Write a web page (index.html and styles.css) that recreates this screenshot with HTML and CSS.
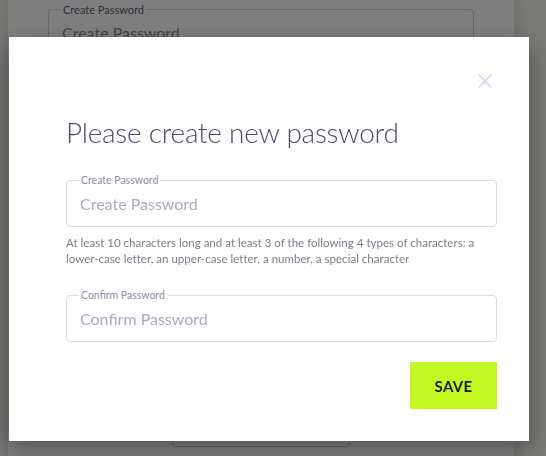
FILE: index.html
```html
<!DOCTYPE html>
<html lang="en">
<head>
<meta charset="utf-8">
<title>Create new password</title>
<link rel="stylesheet" href="styles.css">
</head>
<body>
<div class="page">
  <div class="card">
    <div class="bg-field">
      <span class="bg-label">Create Password</span>
      <span class="bg-placeholder">Create Password</span>
    </div>
    <div class="bg-spacer"></div>
    <div class="bg-button"></div>
  </div>
</div>

<div class="overlay">
  <div class="modal" role="dialog" aria-labelledby="modal-title">
    <div class="modal-head">
      <button class="close" type="button" aria-label="Close">
        <svg width="14" height="14" viewBox="0 0 14 14"><path d="M1 1L13 13M13 1L1 13" stroke="#d4d6ea" stroke-width="1.6" stroke-linecap="round" fill="none"/></svg>
      </button>
    </div>
    <h1 class="title" id="modal-title">Please create new password</h1>
    <label class="field">
      <span class="field-label">Create Password</span>
      <input class="field-input" type="password" placeholder="Create Password">
    </label>
    <p class="hint">At least 10 characters long and at least 3 of the following 4 types of characters: a <span class="nowrap">lower-case</span> letter, an <span class="nowrap">upper-case</span> letter, a number, a special character</p>
    <label class="field field-confirm">
      <span class="field-label">Confirm Password</span>
      <input class="field-input" type="password" placeholder="Confirm Password">
    </label>
    <div class="actions">
      <button class="save" type="button">SAVE</button>
    </div>
  </div>
</div>
</body>
</html>
```
FILE: styles.css
```css
* { box-sizing: border-box; }
html, body {
  margin: 0;
  height: 100%;
  overflow: hidden;
}
body {
  background: #f2f2ea;
  font-family: Lato, "Open Sans", sans-serif;
}

/* underlying page */
.page {
  padding-left: 7px;
}
.card {
  width: 508px;
  height: 456px;
  background: #ffffff;
  border: 1px solid #e6e6e0;
  border-top: none;
  border-bottom: none;
  box-shadow: 0 0 14px rgba(0,0,0,0.12);
  padding: 9px 40px 0 40px;
  display: flex;
  flex-direction: column;
}
.bg-field {
  position: relative;
  height: 60px;
  border: 1px solid #cfcfe0;
  border-radius: 4px;
  padding: 13px 0 0 13px;
}
.bg-label {
  position: absolute;
  top: -7px;
  left: 12px;
  padding: 0 2px;
  background: #fff;
  font-size: 11px;
  color: #5a5a72;
}
.bg-placeholder {
  font-size: 16px;
  color: #8a8aa4;
}
.bg-spacer { height: 338px; }
.bg-button {
  align-self: flex-start;
  margin-left: 124px;
  width: 178px;
  height: 40px;
  border: 1px solid #c8c8c8;
  border-radius: 4px;
}

/* overlay + modal */
.overlay {
  position: fixed;
  inset: 0;
  background: rgba(0,0,0,0.5);
  padding: 37px 0 0 9px;
}
.modal {
  width: 520px;
  background: #ffffff;
  padding: 37px 32px 32px 57px;
  box-shadow: 0 8px 22px rgba(0,0,0,0.35);
  display: flex;
  flex-direction: column;
}
.modal-head {
  display: flex;
  justify-content: flex-end;
  margin-right: 5px;
}
.close {
  border: 0;
  background: none;
  padding: 0;
  width: 14px;
  height: 14px;
  display: block;
  cursor: pointer;
}
.close svg { display: block; }
.title {
  margin: 27px 0 0 0;
  font-size: 28px;
  line-height: 35px;
  font-weight: 300;
  color: #4a4b6c;
  letter-spacing: -0.25px;
}
.field {
  position: relative;
  display: flex;
  align-items: center;
  height: 47px;
  margin-top: 30px;
  border: 1px solid #d9dbea;
  border-radius: 4px;
  padding-left: 13px;
}
.field-confirm { margin-top: 28px; }
.field-label {
  position: absolute;
  top: -7px;
  left: 12px;
  padding: 0 2px;
  background: #ffffff;
  font-size: 10.5px;
  line-height: 12px;
  color: #8c8ca2;
}
.field-input {
  border: 0;
  outline: none;
  background: transparent;
  width: 100%;
  padding: 0;
  font-family: inherit;
  font-size: 16px;
  color: #4a4b6c;
}
.field-input::placeholder {
  color: #a9abc3;
  opacity: 1;
}
.hint {
  margin: 8px 0 0 0;
  font-size: 11.5px;
  line-height: 16px;
  letter-spacing: 0.02px;
  color: #7c7c8a;
}
.nowrap { white-space: nowrap; }
.actions {
  display: flex;
  justify-content: flex-end;
  margin-top: 20px;
}
.save {
  width: 87px;
  height: 47px;
  border: 0;
  background: #c2f922;
  font-family: inherit;
  font-size: 15px;
  font-weight: 700;
  color: #1c1d16;
  letter-spacing: 0.3px;
  cursor: pointer;
}
```
